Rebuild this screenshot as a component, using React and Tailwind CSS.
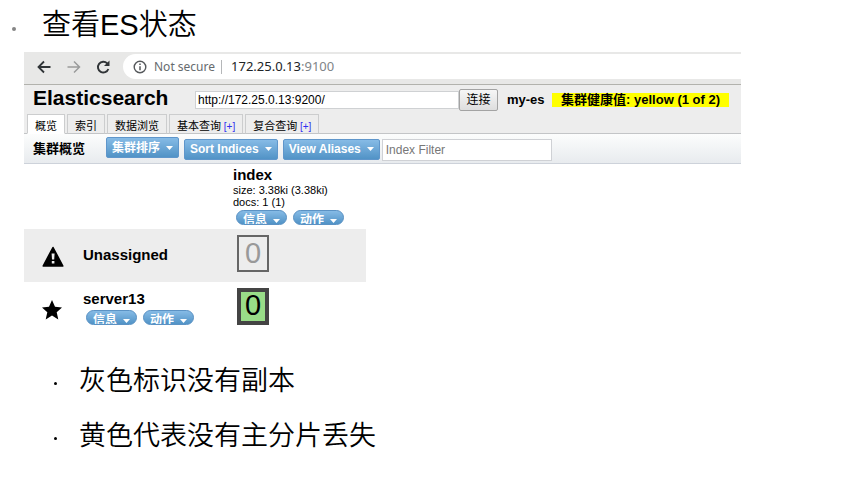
const tabs = [
  { label: "概览", active: true },
  { label: "索引" },
  { label: "数据浏览" },
  { label: "基本查询", add: true },
  { label: "复合查询", add: true },
];

const notes = ["灰色标识没有副本", "黄色代表没有主分片丢失"];

function Caret() {
  return (
    <svg className="h-1 w-[7px] shrink-0" viewBox="0 0 7 4" fill="currentColor" aria-hidden="true">
      <path d="M0 0h7L3.5 4z" />
    </svg>
  );
}

function MenuButton({ children }) {
  return (
    <button
      type="button"
      className="flex h-[21px] items-center gap-1.5 whitespace-nowrap rounded-xs border border-[#5f96cb] bg-linear-to-b from-[#86bbe6] to-[#5193c6] px-[5px] text-[12px] font-bold leading-4 text-white"
    >
      {children}
      <Caret />
    </button>
  );
}

function PillButton({ children }) {
  return (
    <button
      type="button"
      className="flex h-[15px] w-[51px] items-start justify-center gap-1.5 overflow-hidden rounded-full border border-[#5b92c4] bg-linear-to-b from-[#86bbe6] to-[#5193c6] text-[12px] font-bold leading-[18px] text-white"
    >
      {children}
      <span className="mt-2 flex">
        <Caret />
      </span>
    </button>
  );
}

function PillMenu() {
  return (
    <div className="flex gap-1.5 pl-[3px]">
      <PillButton>信息</PillButton>
      <PillButton>动作</PillButton>
    </div>
  );
}

function BrowserBar() {
  return (
    <div className="flex h-[33px] items-center border-b border-[#b2b2ad] bg-[#e8e8e7] pb-[3px] pl-3">
      <button type="button" aria-label="Back" className="mr-[14px] text-[#303437]">
        <svg className="h-4 w-4" viewBox="0 0 16 16" fill="none" stroke="currentColor" strokeWidth="1.8">
          <path d="M14.500 8H2.500M8 2.500 2.500 8 8 13.500" />
        </svg>
      </button>
      <button type="button" aria-label="Forward" className="mr-[13px] text-[#9a9b9b]">
        <svg className="h-4 w-4" viewBox="0 0 16 16" fill="none" stroke="currentColor" strokeWidth="1.5">
          <path d="M1.500 8h12M8 2.500 13.500 8 8 13.500" />
        </svg>
      </button>
      <button type="button" aria-label="Reload" className="mr-3 text-[#303437]">
        <svg className="h-4 w-4" viewBox="0 0 16 16" fill="none" stroke="currentColor" strokeWidth="1.9">
          <path d="M13.400 10A5.400 5.400 0 1 1 12.200 4.300L13.500 5.500" />
          <path d="M14.500 1.500V7H9z" fill="currentColor" stroke="none" />
        </svg>
      </button>
      <div className="flex h-[25px] flex-1 items-center rounded-l-full bg-white pl-2.5 font-['Noto_Sans'] text-[13px] text-[#666a6d]">
        <svg className="h-[14px] w-[14px]" viewBox="0 0 14 14" fill="none" stroke="#55585b" strokeWidth="1.4" aria-hidden="true">
          <circle cx="7" cy="7" r="5.800" />
          <path d="M7 6.200v4M7 3.600v1.400" strokeWidth="1.500" />
        </svg>
        <span className="ml-[7px] mr-1.5 text-[12px]">Not secure</span>
        <span className="mr-[9px] h-[14px] w-px bg-[#b5b7b9]" />
        <span className="text-[#202326]">172.25.0.13</span>
        <span className="text-[#808488]">:9100</span>
      </div>
    </div>
  );
}

function Header() {
  return (
    <header className="border-b border-[#c3c5c7] bg-[#ededed]">
      <div className="flex h-[29px] items-center pl-[9px] pr-3">
        <h2 className="w-[162px] pb-1 text-[21px] font-bold leading-6">Elasticsearch</h2>
        <input
          type="text"
          aria-label="Cluster address"
          defaultValue="http://172.25.0.13:9200/"
          className="h-[18px] w-[264px] border border-[#cfd1d3] bg-white px-0.5 text-[12px]"
        />
        <button
          type="button"
          className="h-[22px] w-[39px] rounded-xs border border-[#a3a3a3] bg-linear-to-b from-[#f6f6f6] to-[#dedede] text-[12px] leading-5"
        >
          连接
        </button>
        <span className="ml-[9px] text-[13px] font-bold">my-es</span>
        <span className="ml-auto whitespace-nowrap bg-[#ffff00] px-[9px] text-[13px] font-bold leading-[14px]">
          集群健康值: yellow (1 of 2)
        </span>
      </div>
      <nav className="-mb-px flex gap-0.5 pl-[3px]">
        {tabs.map((tab) => (
          <a
            key={tab.label}
            href="#"
            className={`h-5 whitespace-nowrap border border-[#cccdce] px-[7px] text-[11px] leading-[23px] ${
              tab.active ? "border-b-white bg-white" : "border-b-[#c3c5c7]"
            }`}
          >
            {tab.label}
            {tab.add && <span className="text-[10px] text-[#2f2ff0]"> [+]</span>}
          </a>
        ))}
      </nav>
    </header>
  );
}

function Toolbar() {
  return (
    <div className="flex h-[30px] items-center border-b border-[#cdd2da] bg-linear-to-b from-[#fcfdfd] to-[#e8ebee] pl-[9px]">
      <h3 className="w-[73px] text-[13px] font-bold">集群概览</h3>
      <div className="mb-0.5 mr-[5px]">
        <MenuButton>集群排序</MenuButton>
      </div>
      <div className="mt-0.5 flex gap-[5px]">
        <MenuButton>Sort Indices</MenuButton>
        <MenuButton>View Aliases</MenuButton>
        <input
          type="text"
          aria-label="Index Filter"
          placeholder="Index Filter"
          className="-ml-[3px] h-[22px] w-[170px] border border-[#cfd1d5] bg-white px-[3px] text-[12px] placeholder:text-[#777]"
        />
      </div>
    </div>
  );
}

function Shard({ assigned, children }) {
  return (
    <span
      className={`flex h-[37px] w-8 items-center justify-center text-[29px] ${
        assigned ? "border-4 border-[#444] bg-[#99dd88] text-black" : "border-2 border-[#666] text-[#999]"
      }`}
    >
      {children}
    </span>
  );
}

function ClusterTable() {
  return (
    <table className="w-[342px] table-fixed text-left">
      <colgroup>
        <col className="w-[58px]" />
        <col className="w-[151px]" />
        <col />
      </colgroup>
      <thead>
        <tr className="h-[65px] align-top">
          <td colSpan={2} />
          <th className="pt-0.5 font-normal">
            <div className="text-[15px] font-bold leading-[18px]">index</div>
            <div className="text-[11px] leading-3">size: 3.38ki (3.38ki)</div>
            <div className="mb-0.5 text-[11px] leading-3">docs: 1 (1)</div>
            <PillMenu />
          </th>
        </tr>
      </thead>
      <tbody>
        <tr className="h-[53px] bg-[#ededed]">
          <td className="pl-[18px]">
            <svg className="h-[22px] w-[22px]" viewBox="0 0 22 22" aria-hidden="true">
              <path d="M11 2.500 20.800 21H1.200z" fill="#000" stroke="#000" strokeWidth="1.600" strokeLinejoin="round" />
              <path d="M9.600 8.500h3l-.4 6H10zM9.800 16h2.600v2.500H9.800z" fill="#ededed" />
            </svg>
          </td>
          <th className="pl-px text-[15px] font-bold">Unassigned</th>
          <td className="pb-1 pl-1">
            <Shard>0</Shard>
          </td>
        </tr>
        <tr className="h-[48px]">
          <td className="pl-[18px] pt-2">
            <svg className="h-5 w-5" viewBox="0 0 20 20" aria-hidden="true">
              <path d="m10 0 3 6.800 7 .7-5.300 4.700 1.600 7.300L10 15.600l-6.300 3.900 1.600-7.300L0 7.500l7-.7z" />
            </svg>
          </td>
          <th className="pl-px pt-0.5">
            <div className="mb-0.5 text-[15px] font-bold leading-[18px]">server13</div>
            <PillMenu />
          </th>
          <td className="pl-1">
            <Shard assigned>0</Shard>
          </td>
        </tr>
      </tbody>
    </table>
  );
}

export default function App() {
  return (
    <main className="min-h-screen bg-white pt-1 font-['Liberation_Sans','Noto_Sans_CJK_SC',sans-serif] text-black">
      <div className="flex h-12 items-center pb-1.5 pl-3">
        <span className="mt-2 h-1 w-1 rounded-full bg-[#858585]" />
        <h1 className="ml-[26px] text-[29px] font-[350] leading-9">查看ES状态</h1>
      </div>
      <section className="ml-6 mr-[106px]">
        <BrowserBar />
        <Header />
        <Toolbar />
        <ClusterTable />
      </section>
      <ul className="mt-[29px] space-y-[15px] pl-[54px] text-[27px] font-[350] leading-10 font-['Noto_Sans_CJK_SC',sans-serif]">
        {notes.map((note) => (
          <li key={note} className="flex items-center">
            <span className="mr-[22px] mt-2 h-[3px] w-[3px] rounded-full bg-black" />
            {note}
          </li>
        ))}
      </ul>
    </main>
  );
}
